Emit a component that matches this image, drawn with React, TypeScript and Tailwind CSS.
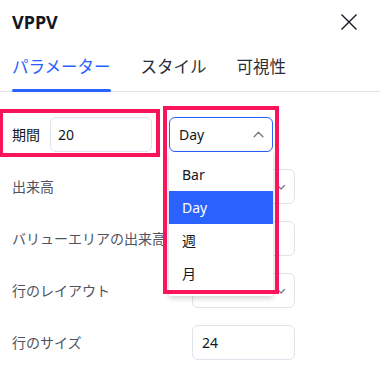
const font = "font-['Noto_Sans','Noto_Sans_CJK_JP',sans-serif]";

const ChevronDown = () => (
  <svg width="12" height="12" viewBox="0 0 12 12" fill="none" className="text-[#787b86]">
    <path d="M2.5 4.5L6 8l3.5-3.5" stroke="currentColor" strokeWidth="1.3" strokeLinecap="round" strokeLinejoin="round" />
  </svg>
);

const ChevronUp = () => (
  <svg width="13" height="13" viewBox="0 0 12 12" fill="none" className="text-[#787b86]">
    <path d="M2 8l4-4 4 4" stroke="currentColor" strokeWidth="1.3" strokeLinecap="round" strokeLinejoin="round" />
  </svg>
);

const Field = ({ value, chevron }: { value?: string; chevron?: boolean }) => (
  <div className="flex h-[35px] w-[103px] shrink-0 items-center justify-between rounded-md border border-[#e0e3eb] bg-white pl-[9px] pr-[7px] text-[14px] text-[#131722]">
    <span>{value}</span>
    {chevron && <ChevronDown />}
  </div>
);

const Row = ({ label, children }: { label: string; children: React.ReactNode }) => (
  <div className="flex h-[35px] items-center">
    <span className="w-[180px] shrink-0 whitespace-nowrap text-[14px] text-[#50535e]">{label}</span>
    {children}
  </div>
);

export default function App() {
  const options = ["Bar", "Day", "週", "月"];
  return (
    <div className={`relative h-[368px] w-[380px] overflow-hidden bg-white ${font}`}>
      {/* header */}
      <div className="flex h-[44px] items-center justify-between pl-3 pr-[22px]">
        <span className="text-[18px] font-bold text-[#131722]">VPPV</span>
        <svg width="18" height="18" viewBox="0 0 18 18" fill="none" className="text-[#131722]">
          <path d="M1.5 1.5l15 15M16.5 1.5l-15 15" stroke="currentColor" strokeWidth="1.4" />
        </svg>
      </div>

      {/* tabs */}
      <div className="flex h-[48px] gap-[30px] border-b border-[#e0e3eb] px-3">
        <div className="relative pt-[11px] text-[16.5px] leading-6 text-[#2962ff]">
          パラメーター
          <div className="absolute bottom-[-1px] left-0 right-0 h-[3px] rounded-sm bg-[#2962ff]" />
        </div>
        <div className="pt-[11px] text-[16.5px] leading-6 text-[#2a2e39]">スタイル</div>
        <div className="pt-[11px] text-[16.5px] leading-6 text-[#2a2e39]">可視性</div>
      </div>

      {/* body */}
      <div className="flex flex-col gap-[17px] px-3 pt-[25px]">
        <div className="flex h-[35px] items-center">
          <span className="w-[38px] shrink-0 text-[14px] text-[#131722]">期間</span>
          <div className="flex h-[35px] w-[102px] items-center rounded-md border border-[#e0e3eb] pl-[7px] text-[14px] text-[#131722]">
            20
          </div>
          <div className="ml-[17px] flex h-[35px] w-[104px] items-center justify-between rounded-md border-[1.5px] border-[#2962ff] pl-[9px] pr-[7px] text-[14px] text-[#131722]">
            <span>Day</span>
            <ChevronUp />
          </div>
        </div>
        <Row label="出来高">
          <Field chevron />
        </Row>
        <Row label="バリューエリアの出来高">
          <Field />
        </Row>
        <Row label="行のレイアウト">
          <Field chevron />
        </Row>
        <Row label="行のサイズ">
          <Field value="24" />
        </Row>
      </div>

      {/* open dropdown */}
      <div className="absolute left-[169px] top-[152px] w-[104px] bg-white py-[6px] shadow-[0_2px_6px_rgba(0,0,0,0.2)]">
        {options.map((o) => (
          <div
            key={o}
            className={`flex h-[33px] items-center px-[13px] text-[14px] ${
              o === "Day" ? "bg-[#2962ff] text-white" : "text-[#131722]"
            }`}
          >
            {o}
          </div>
        ))}
      </div>

      {/* highlight boxes */}
      <div className="pointer-events-none absolute left-[-1px] top-[109px] h-[48px] w-[161px] border-4 border-[#fa1459]" />
      <div className="pointer-events-none absolute left-[163px] top-[106px] h-[188px] w-[116px] border-4 border-[#fa1459]" />
    </div>
  );
}
